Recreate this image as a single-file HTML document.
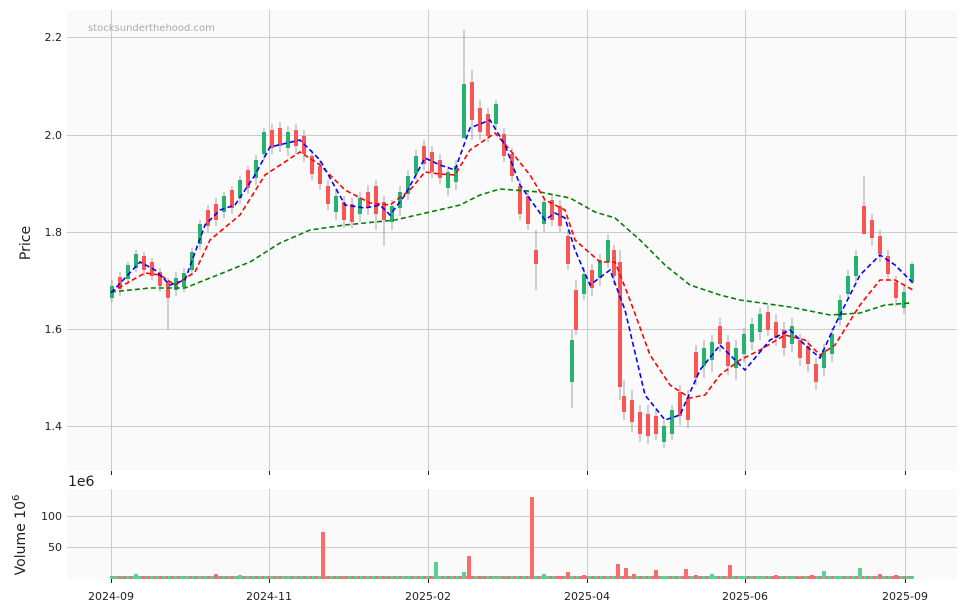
<!DOCTYPE html>
<html><head><meta charset="utf-8"><style>
html,body{margin:0;padding:0;background:#fff;}
svg{display:block;font-family:"DejaVu Sans","Liberation Sans",sans-serif;}
</style></head><body>
<svg width="966" height="611" viewBox="0 0 966 611" xmlns="http://www.w3.org/2000/svg">
<defs><pattern id="vb" x="0" y="0" width="6" height="3" patternUnits="userSpaceOnUse"><rect x="0" y="0" width="3" height="3" fill="#5fcf98"/><rect x="3" y="0" width="3" height="3" fill="#ff6a6a"/></pattern></defs>
<rect x="67" y="10" width="890" height="461" fill="#fafafa"/>
<rect x="67" y="489" width="890" height="90" fill="#fafafa"/>
<g stroke="#cccccc" stroke-width="1">
<line x1="67" x2="957" y1="37.5" y2="37.5"/><line x1="67" x2="957" y1="135.5" y2="135.5"/>
<line x1="67" x2="957" y1="232.5" y2="232.5"/><line x1="67" x2="957" y1="329.5" y2="329.5"/>
<line x1="67" x2="957" y1="426.5" y2="426.5"/>
<line x1="67" x2="957" y1="516.5" y2="516.5"/><line x1="67" x2="957" y1="547.5" y2="547.5"/>
<path d="M111.5 10V471M269.5 10V471M428.5 10V471M587.5 10V471M745.5 10V471M905.5 10V471M111.5 489V579M269.5 489V579M428.5 489V579M587.5 489V579M745.5 489V579M905.5 489V579"/>
</g>
<path stroke="#999" stroke-width="0.9" fill="none" d="
M112 280V302M120 272V296M128 262V284M136 250V272M144 252V276M152 258V280M160 268V292M168 278V330M176 272V296M184 268V292M192 248V276M200 220V250M208 205V232M216 198V226M224 192V218M232 186V214M240 176V204M248 166V194M256 155V185M264 128V160M272 124V154M280 122V152M288 126V156M296 124V154M304 130V162M312 150V180M320 160V190M328 180V210M336 190V220M344 196V228M352 198V228M360 192V222M368 185V215M376 180V230M384 196V246M392 200V230M400 186V216M408 170V200M416 150V180M424 140V170M432 146V178M440 154V184M448 166V196M456 160V190M464 30V130M472 70V140M480 100V140M488 108V142M496 100V130M504 128V162M512 148V182M520 180V220M528 190V230M536 230V290M544 196V232M552 194V226M560 200V232M568 230V270M572 330V408M576 280V335M584 268V300M592 264V296M600 254V286M608 234V268M614 245V285M620 250V400M624 380V420M632 390V432M640 405V442M648 405V444M656 410V440M664 420V448M672 405V440M680 385V425M688 390V428M696 345V385M704 340V378M712 335V372M720 318V352M728 335V375M736 340V380M744 328V362M752 318V350M760 308V340M768 305V336M776 314V346M784 322V356M792 318V352M800 334V366M808 340V372M816 358V390M824 344V376M832 328V362M840 295V326M848 270V300M856 250V282M864 176V232M872 214V246M880 230V262M888 250V280M896 276V306M904 286V314M912 262V284"/>
<path fill="#26b36f" d="
M110 286h4v12h-4zM126 265h4v14h-4zM134 254h4v14h-4zM174 278h4v12h-4zM182 273h4v14h-4zM190 252h4v18h-4zM198 224h4v20h-4zM222 196h4v16h-4zM238 180h4v18h-4zM254 160h4v18h-4zM262 132h4v22h-4zM286 132h4v16h-4zM334 196h4v16h-4zM358 198h4v16h-4zM390 206h4v16h-4zM398 192h4v16h-4zM406 176h4v18h-4zM414 156h4v18h-4zM446 172h4v16h-4zM454 166h4v16h-4zM462 84h4v54h-4zM494 104h4v20h-4zM542 202h4v22h-4zM570 340h4v42h-4zM582 274h4v20h-4zM598 260h4v18h-4zM606 240h4v22h-4zM662 426h4v16h-4zM670 410h4v24h-4zM702 348h4v18h-4zM710 342h4v18h-4zM734 348h4v20h-4zM742 334h4v20h-4zM750 324h4v18h-4zM758 314h4v18h-4zM790 326h4v18h-4zM822 350h4v18h-4zM830 334h4v20h-4zM838 300h4v20h-4zM846 276h4v18h-4zM854 256h4v20h-4zM902 292h4v16h-4zM910 264h4v18h-4z"/>
<path fill="#f85555" d="
M118 277h4v12h-4zM142 256h4v14h-4zM150 262h4v14h-4zM158 272h4v14h-4zM166 282h4v16h-4zM206 210h4v16h-4zM214 204h4v16h-4zM230 190h4v18h-4zM246 170h4v18h-4zM270 130h4v18h-4zM278 128h4v18h-4zM294 130h4v16h-4zM302 136h4v18h-4zM310 156h4v18h-4zM318 166h4v18h-4zM326 186h4v18h-4zM342 202h4v18h-4zM350 204h4v18h-4zM366 192h4v16h-4zM374 186h4v28h-4zM382 202h4v18h-4zM422 146h4v18h-4zM430 152h4v20h-4zM438 160h4v18h-4zM470 82h4v38h-4zM478 108h4v24h-4zM486 114h4v22h-4zM502 134h4v22h-4zM510 154h4v22h-4zM518 186h4v28h-4zM526 196h4v28h-4zM534 250h4v14h-4zM550 200h4v20h-4zM558 206h4v20h-4zM566 236h4v28h-4zM574 290h4v40h-4zM590 270h4v18h-4zM612 250h4v26h-4zM618 262h4v125h-4zM622 396h4v16h-4zM630 400h4v22h-4zM638 412h4v22h-4zM646 414h4v22h-4zM654 416h4v18h-4zM678 392h4v24h-4zM686 398h4v22h-4zM694 352h4v26h-4zM718 326h4v18h-4zM726 342h4v24h-4zM766 312h4v18h-4zM774 322h4v16h-4zM782 330h4v18h-4zM798 340h4v18h-4zM806 346h4v18h-4zM814 364h4v18h-4zM862 206h4v28h-4zM870 220h4v18h-4zM878 236h4v18h-4zM886 256h4v18h-4zM894 282h4v16h-4z"/>
<rect x="110" y="576" width="804" height="3" fill="url(#vb)"/>
<path fill="#5fcf98" d="M110 577h4v2h-4zM134 574h4v5h-4zM182 577h4v2h-4zM198 576h4v3h-4zM238 575h4v4h-4zM286 577h4v2h-4zM406 577h4v2h-4zM434 562h4v17h-4zM462 572h4v7h-4zM494 577h4v2h-4zM542 574h4v5h-4zM570 576h4v3h-4zM606 577h4v2h-4zM662 576h4v3h-4zM710 574h4v5h-4zM742 576h4v3h-4zM758 577h4v2h-4zM790 577h4v2h-4zM822 571h4v8h-4zM838 576h4v3h-4zM858 568h4v11h-4zM910 577h4v2h-4z"/>
<path fill="#ff6a6a" d="M118 577h4v2h-4zM142 576h4v3h-4zM158 577h4v2h-4zM214 574h4v5h-4zM230 577h4v2h-4zM278 577h4v2h-4zM321 532h4v47h-4zM326 577h4v2h-4zM342 577h4v2h-4zM382 577h4v2h-4zM430 577h4v2h-4zM467 556h4v23h-4zM478 576h4v3h-4zM502 577h4v2h-4zM530 497h4v82h-4zM558 576h4v3h-4zM566 572h4v7h-4zM582 575h4v4h-4zM616 564h4v15h-4zM624 568h4v11h-4zM632 574h4v5h-4zM654 570h4v9h-4zM684 569h4v10h-4zM694 575h4v4h-4zM728 565h4v14h-4zM774 575h4v4h-4zM798 577h4v2h-4zM810 575h4v4h-4zM878 574h4v5h-4zM894 575h4v4h-4z"/>
<g fill="none" stroke-width="1.6" stroke-dasharray="5,3">
<polyline stroke="#008000" points="111,292 150,288 185,288 210,278 250,262 280,243 310,230 345,225 395,220 430,212 460,205 480,195 500,189 540,192 570,198 595,212 615,218 640,240 665,265 690,285 720,295 740,300 790,307 830,315 860,313 885,305 910,303"/>
<polyline stroke="#ff0000" points="111,292 145,273 160,275 175,285 195,272 210,240 240,215 265,175 300,152 320,165 345,190 370,203 390,205 410,190 425,172 440,174 455,175 470,150 495,133 510,150 530,175 545,200 565,210 575,240 600,262 615,262 630,300 650,355 670,385 690,398 705,395 720,375 740,360 760,350 785,335 805,340 820,355 835,345 860,305 880,280 895,280 913,290"/>
<polyline stroke="#0000ff" points="111,293 140,262 155,270 170,285 185,280 205,225 220,210 235,205 255,175 270,147 300,140 320,160 345,205 365,208 380,205 390,215 405,195 425,158 440,165 455,170 470,128 490,120 505,145 520,185 545,220 555,213 565,218 575,250 590,285 610,270 625,310 645,395 665,420 680,415 700,370 720,345 745,370 770,340 790,330 805,345 820,358 835,325 860,275 880,255 895,265 913,283"/>
</g>
<path stroke="#222" stroke-width="1" d="M111.5 471v4M269.5 471v4M428.5 471v4M587.5 471v4M745.5 471v4M905.5 471v4M111.5 579v4M269.5 579v4M428.5 579v4M587.5 579v4M745.5 579v4M905.5 579v4"/>
<g fill="#222" font-size="11">
<text x="62" y="41" text-anchor="end">2.2</text><text x="62" y="139" text-anchor="end">2.0</text>
<text x="62" y="236" text-anchor="end">1.8</text><text x="62" y="333" text-anchor="end">1.6</text>
<text x="62" y="430" text-anchor="end">1.4</text>
<text x="62" y="520" text-anchor="end">100</text><text x="62" y="551" text-anchor="end">50</text>
<text x="111" y="600" text-anchor="middle">2024-09</text><text x="269" y="600" text-anchor="middle">2024-11</text>
<text x="428" y="600" text-anchor="middle">2025-02</text><text x="587" y="600" text-anchor="middle">2025-04</text>
<text x="745" y="600" text-anchor="middle">2025-06</text><text x="905" y="600" text-anchor="middle">2025-09</text>
</g>
<text x="68" y="486" font-size="14" fill="#222">1e6</text>
<text x="88" y="31" font-size="10" fill="#aaaaaa">stocksunderthehood.com</text>
<text transform="translate(30,243) rotate(-90)" font-size="14" fill="#222" text-anchor="middle">Price</text>
<text transform="translate(25,535) rotate(-90)" font-size="14" fill="#222" text-anchor="middle">Volume  10<tspan dy="-6" font-size="10">6</tspan></text>
</svg>
</body></html>
